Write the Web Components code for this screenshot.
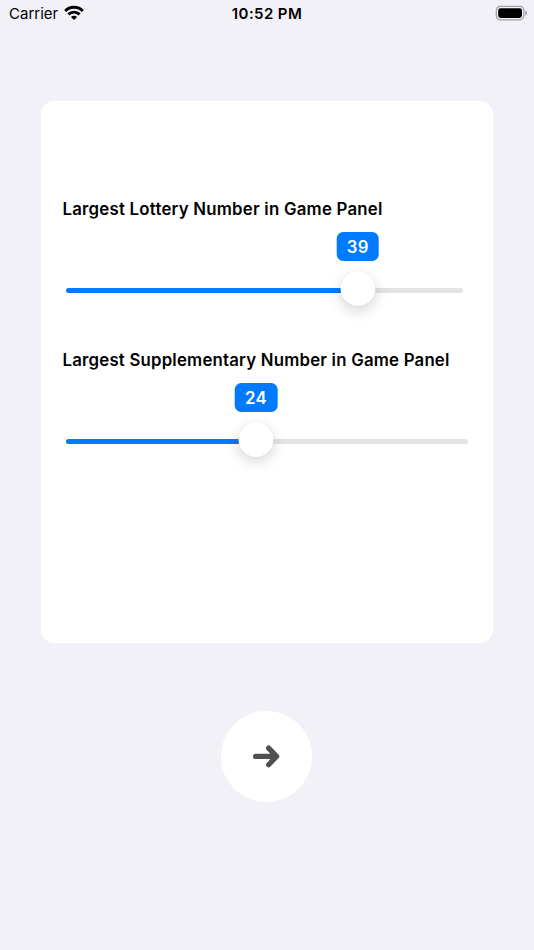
<!DOCTYPE html>
<html lang="en">
<head>
<meta charset="utf-8">
<title>Game Panel</title>
<style>
    html, body {
        margin: 0;
        height: 100%;
        background-color: #f2f1f7;
        font-family: Inter, "Liberation Sans", sans-serif;
        overflow: hidden;
    }
</style>
</head>
<body>
<game-screen>
    <status-bar slot="status" carrier="Carrier" time="10:52 PM"></status-bar>
    <settings-card>
        <number-slider value="39" track="397" fill="291.7" style="--spacing: 0.235px">Largest Lottery Number in Game Panel</number-slider>
        <number-slider value="24" track="402" fill="190" style="--spacing: 0.21px">Largest Supplementary Number in Game Panel</number-slider>
    </settings-card>
    <next-button></next-button>
</game-screen>

<script>
class GameScreen extends HTMLElement {

    constructor() {
        super();
        this.shadowDOM = this.attachShadow({mode: "open"});
    }

    connectedCallback() {
        this.shadowDOM.innerHTML = `
            <style>
                :host {
                    display: flex;
                    flex-direction: column;
                    height: 950px;
                    width: 534px;
                }
                main {
                    display: flex;
                    flex-direction: column;
                    align-items: center;
                    gap: 68.5px;
                    padding-top: 72.5px;
                }
            </style>
            <slot name="status"></slot>
            <main><slot></slot></main>`;
    }
}

class StatusBar extends HTMLElement {

    constructor() {
        super();
        this.shadowDOM = this.attachShadow({mode: "open"});
    }

    connectedCallback() {
        this.shadowDOM.innerHTML = `
            <style>
                :host {
                    display: grid;
                    grid-template-columns: 1fr auto 1fr;
                    align-items: center;
                    box-sizing: border-box;
                    height: 28px;
                    padding: 0 6px 0 9px;
                    color: #000;
                    font-size: 15px;
                    line-height: 28px;
                }
                .left {
                    display: flex;
                    align-items: center;
                    gap: 6px;
                }
                .carrier {
                    width: 49px;
                }
                .time {
                    margin-right: 3px;
                    font-weight: 600;
                    letter-spacing: 0.4px;
                }
                .wifi {
                    margin-top: -2px;
                }
                .battery {
                    justify-self: end;
                    margin-top: -2px;
                }
                svg {
                    display: block;
                }
            </style>
            <div class="left">
                <span class="carrier">${this.getAttribute("carrier")}</span>
                <svg class="wifi" width="20" height="16" viewBox="0 0 20 16" fill="none" stroke="#000" stroke-width="2.9">
                    <path d="M1.2 5.9C6 1 14 1 18.8 5.9"/>
                    <path d="M4.4 9.4C7.6 6.3 12.4 6.3 15.6 9.4"/>
                    <path d="M10 15L6.9 11.9C8.6 10.2 11.4 10.2 13.1 11.9Z" fill="#000" stroke="none"/>
                </svg>
            </div>
            <span class="time">${this.getAttribute("time")}</span>
            <svg class="battery" width="33" height="16" viewBox="0 0 33 16">
                <rect x="1.3" y="1.4" width="27.6" height="13.4" rx="4" fill="none" stroke="#a2a1a5" stroke-width="1.3"/>
                <rect x="3.2" y="3.3" width="23.8" height="9.6" rx="2.3" fill="#000"/>
                <path d="M30.4 5.6C32.4 6.3 32.4 9.7 30.4 10.4Z" fill="#929196"/>
            </svg>`;
    }
}

class SettingsCard extends HTMLElement {

    constructor() {
        super();
        this.shadowDOM = this.attachShadow({mode: "open"});
    }

    connectedCallback() {
        this.shadowDOM.innerHTML = `
            <style>
                :host {
                    display: flex;
                    flex-direction: column;
                    gap: 45px;
                    box-sizing: border-box;
                    width: 451.2px;
                    height: 542px;
                    padding: 96px 21.1px 0;
                    border-radius: 13.5px;
                    background-color: #fff;
                }
            </style>
            <slot></slot>`;
    }
}

class NumberSlider extends HTMLElement {

    constructor() {
        super();
        this.shadowDOM = this.attachShadow({mode: "open"});
    }

    connectedCallback() {
        const track = this.getAttribute("track");
        const fill = this.getAttribute("fill");

        this.shadowDOM.innerHTML = `
            <style>
                :host {
                    display: block;
                    height: 106px;
                }
                .label {
                    height: 24px;
                    line-height: 24px;
                    color: #000;
                    font-size: 16.8px;
                    font-weight: 600;
                    letter-spacing: var(--spacing, 0);
                    white-space: nowrap;
                }
                .track {
                    position: relative;
                    width: ${track}px;
                    height: 5px;
                    margin: 67.5px 0 0 3.5px;
                    border-radius: 3px;
                    background-color: #e3e3e4;
                }
                .fill {
                    width: ${fill}px;
                    height: 100%;
                    border-radius: 3px;
                    background-color: #007aff;
                }
                .thumb, .badge {
                    position: absolute;
                    left: ${fill}px;
                    transform: translateX(-50%);
                }
                .thumb {
                    top: -17px;
                    width: 35px;
                    height: 35px;
                    border-radius: 50%;
                    background-color: #fff;
                    box-shadow: 0 5px 14px rgba(0, 0, 0, 0.16), 0 0 1px rgba(0, 0, 0, 0.12);
                }
                .badge {
                    top: -55.7px;
                    width: 42.6px;
                    height: 28.6px;
                    border-radius: 6.5px;
                    background-color: #007aff;
                    color: #fff;
                    font-size: 16.8px;
                    font-weight: 600;
                    letter-spacing: 0.3px;
                    line-height: 30px;
                    text-align: center;
                }
            </style>
            <div class="label"><slot></slot></div>
            <div class="track">
                <div class="fill"></div>
                <div class="badge">${this.getAttribute("value")}</div>
                <div class="thumb"></div>
            </div>`;
    }
}

class NextButton extends HTMLElement {

    constructor() {
        super();
        this.shadowDOM = this.attachShadow({mode: "open"});
    }

    connectedCallback() {
        this.shadowDOM.innerHTML = `
            <style>
                :host {
                    display: block;
                    margin-right: 1px;
                }
                button {
                    display: flex;
                    align-items: center;
                    justify-content: center;
                    width: 91px;
                    height: 91px;
                    padding: 0;
                    border: 0;
                    border-radius: 50%;
                    background-color: #fff;
                }
            </style>
            <button aria-label="Next">
                <svg width="31" height="31" viewBox="0 0 31 31" fill="none" stroke="#505050" stroke-width="5.2" stroke-linecap="round" stroke-linejoin="round">
                    <path d="M4.6 15.4H25.2M17.6 7.1L25.6 15.4L17.6 23.7"/>
                </svg>
            </button>`;
    }
}

customElements.define("game-screen", GameScreen);
customElements.define("status-bar", StatusBar);
customElements.define("settings-card", SettingsCard);
customElements.define("number-slider", NumberSlider);
customElements.define("next-button", NextButton);
</script>
</body>
</html>
